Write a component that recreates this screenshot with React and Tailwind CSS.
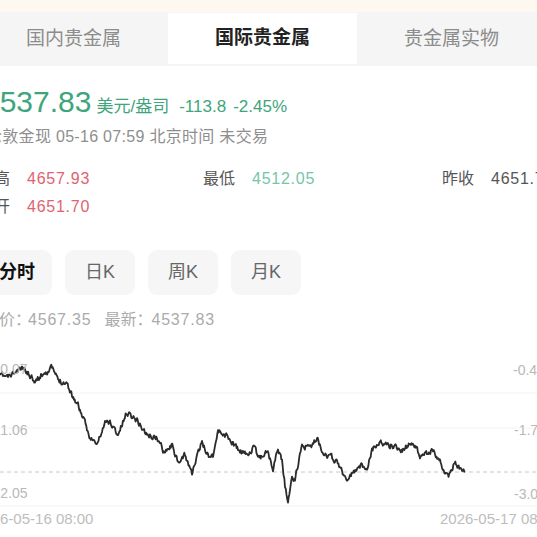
import React from 'react';

const FONT = { fontFamily: "'Liberation Sans', 'Noto Sans CJK SC', sans-serif" };

// rough trace of the intraday line, page coords
const KEYS = [
  [0, 375], [8, 377], [23, 368], [33, 378], [37, 380], [43, 373], [52, 368], [58, 380],
  [67, 383], [72, 395], [78, 405], [82, 415], [87, 430], [90, 437], [97, 445], [105, 423],
  [110, 422], [118, 435], [127, 412], [137, 420], [147, 435], [157, 438], [163, 450],
  [173, 445], [178, 465], [185, 455], [192, 473], [202, 442], [208, 455], [213, 455],
  [218, 431], [227, 436], [240, 452], [247, 455], [253, 448], [260, 458], [267, 450],
  [270, 460], [273, 468], [278, 448], [282, 460], [285, 485], [288, 505], [292, 475],
  [295, 480], [297, 470], [302, 445], [310, 448], [317, 438], [322, 450], [328, 455],
  [337, 462], [342, 470], [347, 482], [353, 473], [362, 465], [367, 468], [372, 450],
  [378, 443], [390, 445], [403, 450], [413, 442], [420, 455], [433, 450], [440, 462],
  [445, 472], [450, 475], [454, 462], [460, 470], [465, 472],
];

function buildPath() {
  let seed = 11;
  const rnd = () => {
    seed = (seed * 16807) % 2147483647;
    return seed / 2147483647;
  };
  const pts = [];
  let walk = 0;
  for (let i = 0; i < KEYS.length - 1; i++) {
    const [x0, y0] = KEYS[i];
    const [x1, y1] = KEYS[i + 1];
    const steps = Math.max(1, Math.round((x1 - x0) / 0.7));
    for (let s = 0; s < steps; s++) {
      const t = s / steps;
      walk = walk * 0.5 + (rnd() - 0.5) * 5.2;
      const n = i === 0 && s === 0 ? 0 : walk;
      pts.push([x0 + (x1 - x0) * t, y0 + (y1 - y0) * t + n - 355]);
    }
  }
  const last = KEYS[KEYS.length - 1];
  pts.push([last[0], last[1] - 355]);
  return pts.map((p, i) => `${i ? 'L' : 'M'}${p[0].toFixed(1)} ${p[1].toFixed(1)}`).join(' ');
}

const LINE = buildPath();

function Stat({ label, value, color, w }) {
  return (
    <div className={`flex items-center shrink-0 ${w}`}>
      <span className="text-[16px] text-[#555] w-[49px] shrink-0">{label}</span>
      <span className={`text-[16px] tracking-[0.75px] ${color}`}>{value}</span>
    </div>
  );
}

export default function App() {
  const tabs = ['国内贵金属', '国际贵金属', '贵金属实物'];
  const periods = ['分时', '日K', '周K', '月K'];

  return (
    <div className="w-[537px] h-[537px] overflow-hidden bg-white relative" style={FONT}>
      <div className="h-[12px] bg-[#fdf9f1]" />

      <div className="flex h-[54px] bg-[#f5f5f5] ml-[-21px]">
        {tabs.map((t, i) => (
          <div key={t}
            className={`w-[189px] shrink-0 flex items-center justify-center text-[19px] ${i === 1 ? 'bg-white text-[#222] font-semibold h-[51px] self-start mt-[1px]' : 'text-[#8c8c8c]'}`}>
            {t}
          </div>
        ))}
      </div>

      <div className="ml-[-22px]">
        <div className="flex items-baseline pl-[5px] mt-[18px] h-[36px] whitespace-nowrap">
          <span className="text-[30px] leading-[36px] text-[#3ea57c]">4537.83</span>
          <span className="text-[17px] text-[#3ea57c] ml-[5px]">美元/盎司</span>
          <span className="text-[17px] text-[#3ea57c] ml-[10px]">-113.8</span>
          <span className="text-[17px] text-[#3ea57c] ml-[7px]">-2.45%</span>
        </div>

        <div className="pl-[8px] mt-[6px] text-[16px] leading-[22px] tracking-[0.3px] text-[#8e8e8e] whitespace-nowrap">
          伦敦金现 05-16 07:59 北京时间 未交易
        </div>

        <div className="flex mt-[19px] h-[24px] whitespace-nowrap">
          <Stat label="最高" value="4657.93" color="text-[#e0636f]" w="w-[225px]" />
          <Stat label="最低" value="4512.05" color="text-[#74c6a7]" w="w-[239px]" />
          <Stat label="昨收" value="4651.70" color="text-[#555]" w="w-[200px]" />
        </div>
        <div className="flex mt-[4px] h-[24px] whitespace-nowrap">
          <Stat label="今开" value="4651.70" color="text-[#e0636f]" w="w-[225px]" />
        </div>

        <div className="flex gap-[13px] pl-[4px] mt-[31px]">
          {periods.map((p, i) => (
            <div key={p}
              className={`w-[70px] h-[45px] shrink-0 rounded-[9px] bg-[#f6f6f6] flex items-center justify-center text-[18px] ${i === 0 ? 'text-[#111] font-semibold' : 'text-[#666]'}`}>
              {p}
            </div>
          ))}
        </div>

        <div className="flex pl-[5px] mt-[14px] h-[22px] items-center text-[16px] text-[#ababab] whitespace-nowrap">
          <span>均价：</span>
          <span className="tracking-[0.8px] ml-[-3px]">4567.35</span>
          <span className="ml-[13px]">最新：</span>
          <span className="tracking-[0.8px] ml-[-1px]">4537.83</span>
        </div>
      </div>

      <div className="relative h-[155px] mt-[24px]">
        <svg className="absolute inset-0" width="537" height="155" viewBox="0 0 537 155">
          <line x1="0" y1="38" x2="537" y2="38" stroke="#f3f3f3" strokeWidth="1" />
          <line x1="0" y1="73" x2="537" y2="73" stroke="#f3f3f3" strokeWidth="1" />
          <line x1="0" y1="151" x2="537" y2="151" stroke="#f3f3f3" strokeWidth="1" />
          <line x1="0" y1="117" x2="537" y2="117" stroke="#c8c8c8" strokeWidth="1" strokeDasharray="4 3" />
          <path d={LINE} fill="none" stroke="#2b2b2b" strokeWidth="1.8" strokeLinejoin="round" />
        </svg>
        <span className="absolute left-[-23px] top-[4px] text-[14px] leading-[20px] text-[#b8b8b8]">4630.07</span>
        <span className="absolute left-[-23px] top-[65px] text-[14px] leading-[20px] text-[#b8b8b8]">4571.06</span>
        <span className="absolute left-[-23px] top-[128px] text-[14px] leading-[20px] text-[#b8b8b8]">4512.05</span>
        <span className="absolute left-[513px] top-[5px] text-[14px] leading-[20px] text-[#b8b8b8] whitespace-nowrap">-0.46%</span>
        <span className="absolute left-[514px] top-[65px] text-[14px] leading-[20px] text-[#b8b8b8] whitespace-nowrap">-1.73%</span>
        <span className="absolute left-[514px] top-[129px] text-[14px] leading-[20px] text-[#b8b8b8] whitespace-nowrap">-3.00%</span>
      </div>

      <div className="flex h-[18px] items-center text-[15px] text-[#bdbdbd] whitespace-nowrap">
        <span className="w-[465px] shrink-0 ml-[-25px]">2026-05-16 08:00</span>
        <span className="shrink-0">2026-05-17 08:00</span>
      </div>
    </div>
  );
}
